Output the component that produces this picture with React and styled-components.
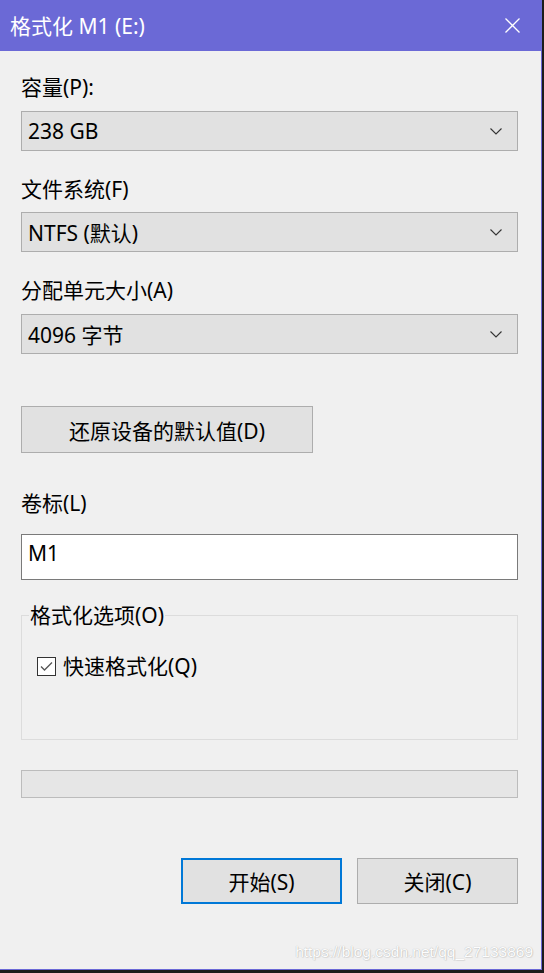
import React from "react";
import styled, { createGlobalStyle, css } from "styled-components";

const GlobalStyle = createGlobalStyle`
  html, body {
    margin: 0;
    padding: 0;
    background: #1c1c1c;
  }
  body {
    font-family: "Noto Sans", "Noto Sans CJK SC", sans-serif;
  }
`;

const Window = styled.div`
  position: relative;
  width: 541px;
  height: 969px;
  background: #f0f0f0;
  border-right: 1px solid #6b69d6;
  border-bottom: 1px solid #6b69d6;
  display: flex;
  flex-direction: column;
  overflow: hidden;
`;

const TitleBar = styled.div`
  height: 51px;
  flex-shrink: 0;
  background: #6b69d6;
  display: flex;
  align-items: center;
  justify-content: space-between;
  padding: 0 21px 0 10px;
  color: #fff;
`;

const Title = styled.div`
  font-size: 21px;
  line-height: 28px;
`;

const Body = styled.div`
  display: flex;
  flex-direction: column;
  padding: 22px 23px 0 21px;
`;

const Label = styled.div`
  font-size: 21px;
  line-height: 28px;
  color: #000;
  margin-top: ${(p) => p.$top || 0}px;
`;

const Select = styled.div`
  box-sizing: border-box;
  height: 40px;
  margin-top: ${(p) => p.$top || 10}px;
  background: #e1e1e1;
  border: 1px solid #adadad;
  display: flex;
  align-items: center;
  justify-content: space-between;
  padding: 0 15px 0 6px;
  font-size: 21px;
  color: #000;
`;

const Button = styled.div`
  box-sizing: border-box;
  height: ${(p) => p.$h || 46}px;
  width: ${(p) => p.$w}px;
  background: #e1e1e1;
  border: 1px solid #adadad;
  display: flex;
  align-items: center;
  justify-content: center;
  font-size: 21px;
  color: #000;
  margin-top: ${(p) => p.$top || 0}px;
  ${(p) =>
    p.$primary &&
    css`
      border: 2px solid #0078d7;
    `}
`;

const TextBox = styled.div`
  box-sizing: border-box;
  height: 46px;
  margin-top: 17px;
  background: #fff;
  border: 1px solid #7a7a7a;
  padding: 4px 6px 0;
  font-size: 21px;
  line-height: 28px;
  color: #000;
`;

const GroupBox = styled.div`
  position: relative;
  box-sizing: border-box;
  height: 125px;
  margin-top: 35px;
  border: 1px solid #dcdcdc;
  padding: 36px 0 0 15px;
`;

const Legend = styled.div`
  position: absolute;
  top: -15px;
  left: 7px;
  padding: 0 1px;
  background: #f0f0f0;
  font-size: 21px;
  line-height: 28px;
  color: #000;
`;

const CheckRow = styled.div`
  display: flex;
  align-items: center;
  gap: 7px;
  font-size: 21px;
  line-height: 28px;
  color: #000;
`;

const CheckBox = styled.div`
  box-sizing: border-box;
  width: 19px;
  height: 19px;
  border: 1px solid #333;
  background: #fff;
  display: flex;
  align-items: center;
  justify-content: center;
`;

const Progress = styled.div`
  box-sizing: border-box;
  height: 28px;
  margin-top: 30px;
  background: #e6e6e6;
  border: 1px solid #bcbcbc;
`;

const ButtonRow = styled.div`
  display: flex;
  justify-content: flex-end;
  gap: 15px;
  margin-top: 60px;
`;

const Watermark = styled.div`
  position: absolute;
  right: 8px;
  bottom: 8px;
  font-family: "Liberation Sans", Arial, sans-serif;
  font-size: 15.5px;
  line-height: 18px;
  color: #fdfdfd;
  text-shadow: 0 0 1px rgba(0, 0, 0, 0.3), 1px 1px 1px rgba(0, 0, 0, 0.08);
`;

const Chevron = () => (
  <svg width="12" height="7" viewBox="0 0 12 7">
    <path d="M0.5 0.5 L6 6 L11.5 0.5" fill="none" stroke="#333" strokeWidth="1.1" />
  </svg>
);

const CloseIcon = () => (
  <svg width="15" height="15" viewBox="0 0 15 15">
    <path d="M0.5 0.5 L14.5 14.5 M14.5 0.5 L0.5 14.5" stroke="#fff" strokeWidth="1.3" />
  </svg>
);

const Check = () => (
  <svg width="13" height="11" viewBox="0 0 13 11">
    <path d="M1 5.5 L4.5 9 L12 1.5" fill="none" stroke="#555" strokeWidth="1.3" />
  </svg>
);

const App = () => {
  return (
    <>
      <GlobalStyle />
      <Window>
        <TitleBar>
          <Title>格式化 M1 (E:)</Title>
          <CloseIcon />
        </TitleBar>
        <Body>
          <Label>容量(P):</Label>
          <Select>
            <span>238 GB</span>
            <Chevron />
          </Select>

          <Label $top={24}>文件系统(F)</Label>
          <Select $top={9}>
            <span>NTFS (默认)</span>
            <Chevron />
          </Select>

          <Label $top={24}>分配单元大小(A)</Label>
          <Select>
            <span>4096 字节</span>
            <Chevron />
          </Select>

          <Button $w={292} $h={47} $top={52}>
            还原设备的默认值(D)
          </Button>

          <Label $top={36}>卷标(L)</Label>
          <TextBox>M1</TextBox>

          <GroupBox>
            <Legend>格式化选项(O)</Legend>
            <CheckRow>
              <CheckBox>
                <Check />
              </CheckBox>
              快速格式化(Q)
            </CheckRow>
          </GroupBox>

          <Progress />

          <ButtonRow>
            <Button $w={161} $primary>
              开始(S)
            </Button>
            <Button $w={161}>关闭(C)</Button>
          </ButtonRow>
        </Body>
        <Watermark>https://blog.csdn.net/qq_27133869</Watermark>
      </Window>
    </>
  );
};

export default App;
